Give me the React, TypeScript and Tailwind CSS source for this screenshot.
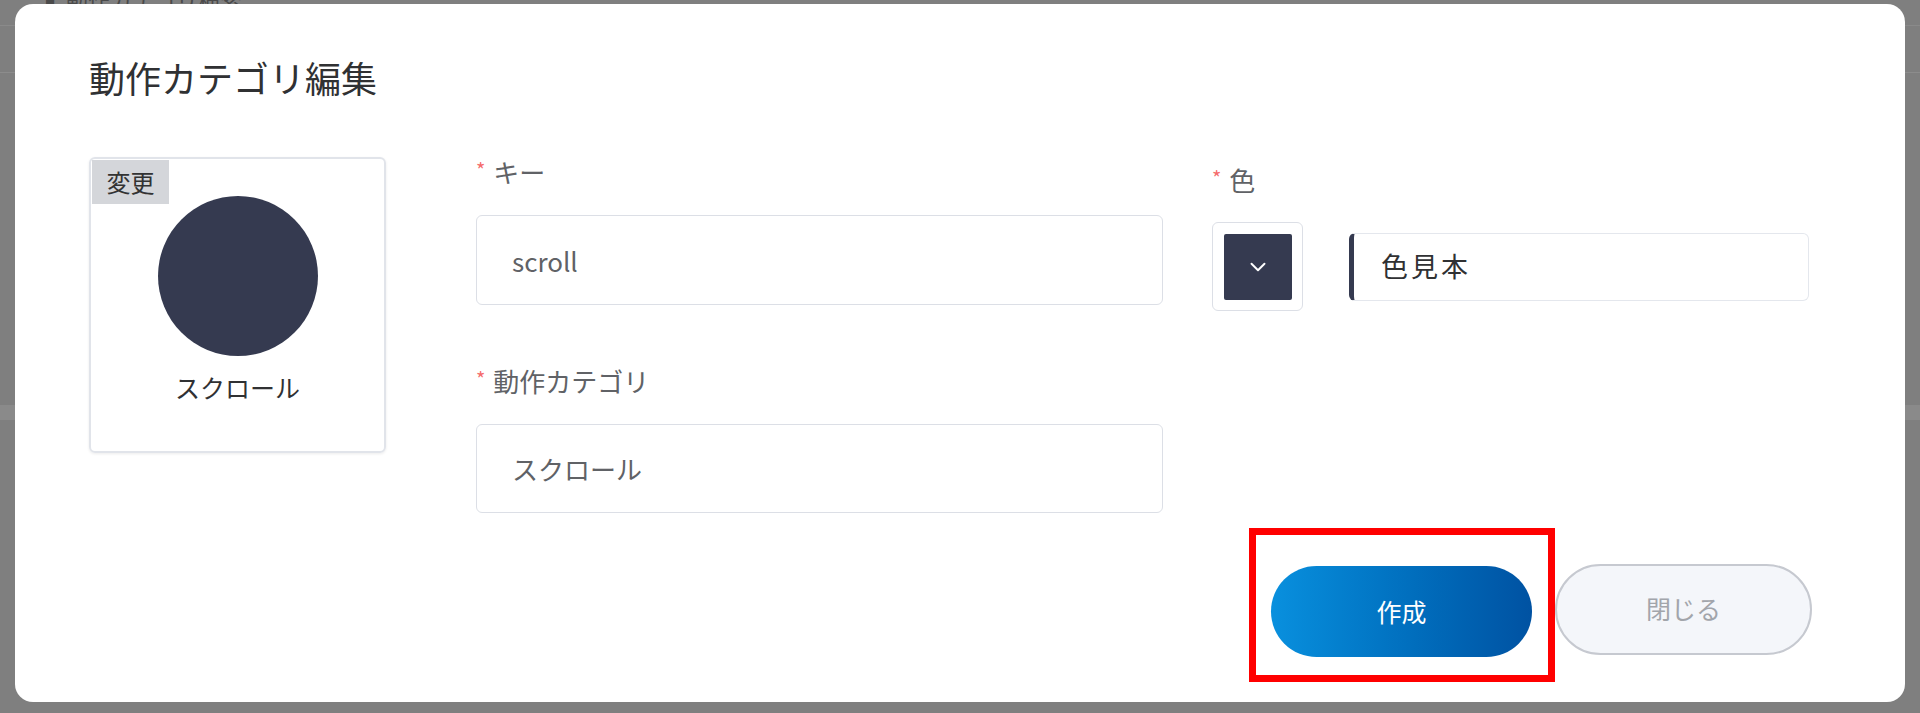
import React, { FC } from 'react'
import { ChevronDown } from 'lucide-react'

const NAVY = 'bg-[#353a50]'

const FieldLabel: FC<{ text: string }> = ({ text }) => (
  <div className="flex items-center h-[32px] text-[26px] leading-[32px] text-[#606266]">
    <span className="text-[#f56c6c] text-[20px] mr-[8px] -mt-[4px]">*</span>
    <span>{text}</span>
  </div>
)

const TextInput: FC<{ value: string; h: string }> = ({ value, h }) => (
  <div className={`w-full ${h} flex items-center px-[35px] border border-[#dcdfe6] rounded-[6px] bg-white text-[26px] text-[#606266]`}>
    {value}
  </div>
)

export default function App() {
  return (
    <div className="relative w-[1920px] h-[713px] overflow-hidden bg-[#7f7f7f] font-['Noto_Sans_CJK_JP',sans-serif]">
      {/* dimmed page behind the dialog */}
      <div className="flex flex-col">
        <div className="h-[38px] border-b border-[#8a8a8a] flex items-start pl-[44px] -mt-[12px] text-[22px] leading-[22px] text-[#4a4a4a]">
          <span className="mr-[10px]">▮</span>動作カテゴリ検索
        </div>
        <div className="h-[47px] border-b border-[#8c8c8c]" />
        <div className="h-[332px]" />
        <div className="h-[15px] bg-[#8a8a8a]" />
      </div>

      {/* dialog */}
      <div className="absolute left-[15px] top-[4px] w-[1890px] h-[698px] bg-white rounded-[18px] pt-[50px] pl-[74px]">
        <h2 className="text-[36px] leading-[47px] text-[#303133] mb-[56px]">動作カテゴリ編集</h2>

        <div className="flex items-start">
          {/* preview card */}
          <div className="relative w-[297px] h-[296px] border-2 border-[#e1e4ea] rounded-[6px] flex flex-col items-center pt-[37px] shadow-[0_1px_3px_rgba(0,0,0,0.08)]">
            <div className="absolute left-[1px] top-[1px] w-[77px] h-[44px] bg-[#d4d6da] flex items-center justify-center text-[24px] text-[#333]">
              変更
            </div>
            <div className={`w-[160px] h-[160px] rounded-full ${NAVY}`} />
            <div className="mt-[15px] text-[25px] leading-[32px] text-[#303133]">スクロール</div>
          </div>

          {/* form */}
          <div className="ml-[90px] -mt-[1px] w-[687px] flex flex-col">
            <FieldLabel text="キー" />
            <div className="mt-[27px]">
              <TextInput value="scroll" h="h-[90px]" />
            </div>
            <div className="mt-[60px]">
              <FieldLabel text="動作カテゴリ" />
            </div>
            <div className="mt-[27px]">
              <TextInput value="スクロール" h="h-[89px]" />
            </div>
          </div>

          <div className="ml-[49px] mt-[7px] w-[597px] flex flex-col">
            <FieldLabel text="色" />
            <div className="mt-[26px] flex items-center">
              <div className="w-[91px] h-[89px] border border-[#dcdfe6] rounded-[6px] flex items-center justify-center">
                <div className={`w-[68px] h-[66px] ${NAVY} rounded-[2px] flex items-center justify-center`}>
                  <ChevronDown className="text-white" size={26} strokeWidth={1.8} />
                </div>
              </div>
              <div className="ml-[46px] w-[460px] h-[68px] flex items-center pl-[27px] border border-[#e4e7ed] border-l-[5px] border-l-[#353a50] rounded-[6px] text-[27px] tracking-[3px] text-[#303133]">
                色見本
              </div>
            </div>
          </div>
        </div>

        {/* footer */}
        <div className="mt-[53px] pr-[93px] flex justify-end items-center gap-[23px]">
          <div className="relative">
            <button className="w-[261px] h-[91px] rounded-full bg-gradient-to-r from-[#0990de] to-[#0052a2] text-white text-[25px]">
              作成
            </button>
            <div className="absolute -left-[22px] -top-[38px] -right-[23px] -bottom-[25px] border-[7px] border-[#ff0000] pointer-events-none" />
          </div>
          <button className="w-[257px] h-[91px] -mt-[5px] rounded-full border-2 border-[#c6c9d0] bg-[#f4f6fa] text-[#a2a5ab] text-[25px]">
            閉じる
          </button>
        </div>
      </div>
    </div>
  )
}
